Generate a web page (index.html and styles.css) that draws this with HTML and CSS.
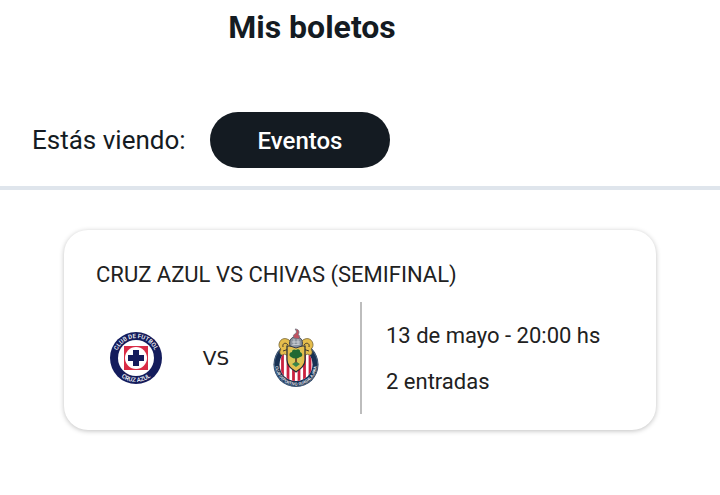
FILE: index.html
```
<!DOCTYPE html>
<html lang="es">
<head>
    <meta charset="UTF-8">
    <meta name="viewport" content="width=device-width, initial-scale=1.0">
    <title>Mis boletos</title>
    <link rel="stylesheet" href="styles.css">
</head>
<body>
    <header class="page-header">
        <h1>Mis boletos</h1>
    </header>

    <nav class="filter-bar">
        <span class="filter-label" id="filter-label">Estás viendo:</span>
        <button class="filter-button" type="button" aria-describedby="filter-label">Eventos</button>
    </nav>

    <main class="tickets">
        <article class="ticket-card">
            <h2>CRUZ AZUL VS CHIVAS (SEMIFINAL)</h2>
            <div class="ticket-body">
                <div class="teams">
                    <!-- Cruz Azul -->
                    <svg class="crest" viewBox="0 0 60 60" role="img" aria-label="Cruz Azul">
                        <defs>
                            <path id="azul-top" d="M10 30 A20 20 0 0 1 50 30"/>
                            <path id="azul-bottom" d="M6 30 A24 24 0 0 0 54 30"/>
                        </defs>
                        <circle cx="30" cy="30" r="26" fill="#141c5c"/>
                        <circle cx="30" cy="30" r="18" fill="#fff"/>
                        <rect x="18" y="18" width="24" height="24" fill="#d92b45"/>
                        <circle cx="30" cy="30" r="11" fill="#fff"/>
                        <path d="M27 22h6v5h5v6h-5v5h-6v-5h-5v-6h5z" fill="#141c5c"/>
                        <text class="crest-text"><textPath href="#azul-top" startOffset="50%" text-anchor="middle">CLUB DE FUTBOL</textPath></text>
                        <text class="crest-text"><textPath href="#azul-bottom" startOffset="50%" text-anchor="middle">CRUZ AZUL</textPath></text>
                    </svg>

                    <span class="versus">VS</span>

                    <!-- Chivas -->
                    <svg class="crest" viewBox="0 0 60 60" role="img" aria-label="Chivas">
                        <defs>
                            <path id="chivas-ring" d="M12.9 25 A20.7 20.7 0 1 0 47.1 25"/>
                            <clipPath id="chivas-clip"><circle cx="30" cy="36.5" r="16.5"/></clipPath>
                        </defs>
                        <circle cx="30" cy="36.5" r="22.5" fill="#183153"/>
                        <circle cx="30" cy="36.5" r="21.7" fill="none" stroke="#6f879d" stroke-width="0.6"/>
                        <g clip-path="url(#chivas-clip)">
                            <rect x="13" y="20" width="34" height="34" fill="#fff"/>
                            <path d="M16.5 20v34M22 20v34M27.5 20v34M33 20v34M38.5 20v34M44 20v34" stroke="#c9213f" stroke-width="2.8"/>
                        </g>
                        <text class="crest-text ring-text"><textPath href="#chivas-ring" startOffset="50%" text-anchor="middle">CLUB DEPORTIVO GUADALAJARA</textPath></text>
                        <path d="M26 15C21 8 14 10 13 16c-.3 2 .5 4 2 5-3 4 .5 8 3 5l5 2 3-8z" fill="#e5bd4c" stroke="#66572f" stroke-width=".7"/>
                        <path d="M34 15c5-7 12-5 13 1 .3 2-.5 4-2 5 3 4-.5 8-3 5l-5 2-3-8z" fill="#e5bd4c" stroke="#66572f" stroke-width=".7"/>
                        <path d="M17 19c-1-4 3-5 5-2m21 2c1-4-3-5-5-2M17 23l6-2m20 2-6-2" fill="none" stroke="#453b2b" stroke-width="1"/>
                        <path d="M21 18h18v14c0 6-5 9-9 12-4-3-9-6-9-12z" fill="#e5bd4c" stroke="#202b37" stroke-width="1.2"/>
                        <path d="M24 21h12v11c0 4-3 6-6 8-3-2-6-4-6-8z" fill="#d8c656"/>
                        <path d="M29 28h2v6l2 2h-6l2-2z" fill="#74532b"/>
                        <path d="M25 29c-3-2-1-5 1-5 0-3 3-3 4-2 2-2 5 0 4 2 3 1 3 5 0 5-3 2-6 2-9 0z" fill="#216933"/>
                        <path d="M26 36l4-2 4 2-4 3z" fill="#39864b"/>
                        <path d="M24 18c-1-4 0-8 4-9h4c4 1 5 5 4 9l-6 2z" fill="#8a929d" stroke="#343c4c" stroke-width="1"/>
                        <path d="M28 10c-2-3 1-4 2-5 1-1 0-3-1-4 4 0 5 3 3 6 2 0 2 2 1 4z" fill="#bf5261" stroke="#66727f" stroke-width=".7"/>
                        <path d="M26 14h8M26 17l8-1M28 11v6M32 11v6" stroke="#d5d9df" stroke-width=".8"/>
                    </svg>
                </div>
                <div class="details">
                    <p>13 de mayo - 20:00 hs</p>
                    <p>2 entradas</p>
                </div>
            </div>
        </article>
    </main>
</body>
</html>
```

FILE: styles.css
```
* {
    margin: 0;
    padding: 0;
    box-sizing: border-box;
}

body {
    background: #fff;
    color: #141b22;
    font-family: 'Roboto', sans-serif;
}

.page-header {
    padding: 7px 96px 65px 0;
    text-align: center;
}

h1 {
    font-size: 32px;
    font-weight: 700;
    line-height: 40px;
}

.filter-bar {
    display: flex;
    align-items: center;
    gap: 24px;
    padding: 0 32px 18px;
    border-bottom: 4px solid #dfe5ec;
}

.filter-label {
    font-size: 26px;
    line-height: 32px;
}

.filter-button {
    padding: 15px 48px 13px;
    background: #141b22;
    border: none;
    border-radius: 28px;
    color: #fff;
    font-family: inherit;
    font-size: 24px;
    font-weight: 500;
    line-height: 28px;
    cursor: pointer;
}

.tickets {
    padding: 40px 64px;
}

.ticket-card {
    padding: 30px 32px 16px;
    border-radius: 24px;
    box-shadow: 0 1px 5px rgba(0, 0, 0, 0.25);
    color: #212121;
}

h2 {
    margin-bottom: 12px;
    font-size: 22px;
    font-weight: 400;
    line-height: 30px;
}

.ticket-body {
    display: grid;
    grid-template-columns: 1fr 1fr;
}

.teams {
    display: grid;
    grid-template-columns: repeat(3, 1fr);
    place-items: center;
    padding-right: 24px;
}

.crest {
    width: 60px;
    height: 60px;
}

.crest-text {
    fill: #fff;
    font-size: 6px;
    font-weight: 500;
}

.ring-text {
    font-size: 4px;
}

.versus {
    font-family: 'DejaVu Sans', sans-serif;
    font-size: 20px;
    line-height: 24px;
}

.details {
    display: flex;
    flex-direction: column;
    justify-content: center;
    gap: 16px;
    min-height: 112px;
    padding: 2px 0 0 24px;
    border-left: 2px solid #bdbdbd;
    font-size: 22px;
    line-height: 30px;
}
```
